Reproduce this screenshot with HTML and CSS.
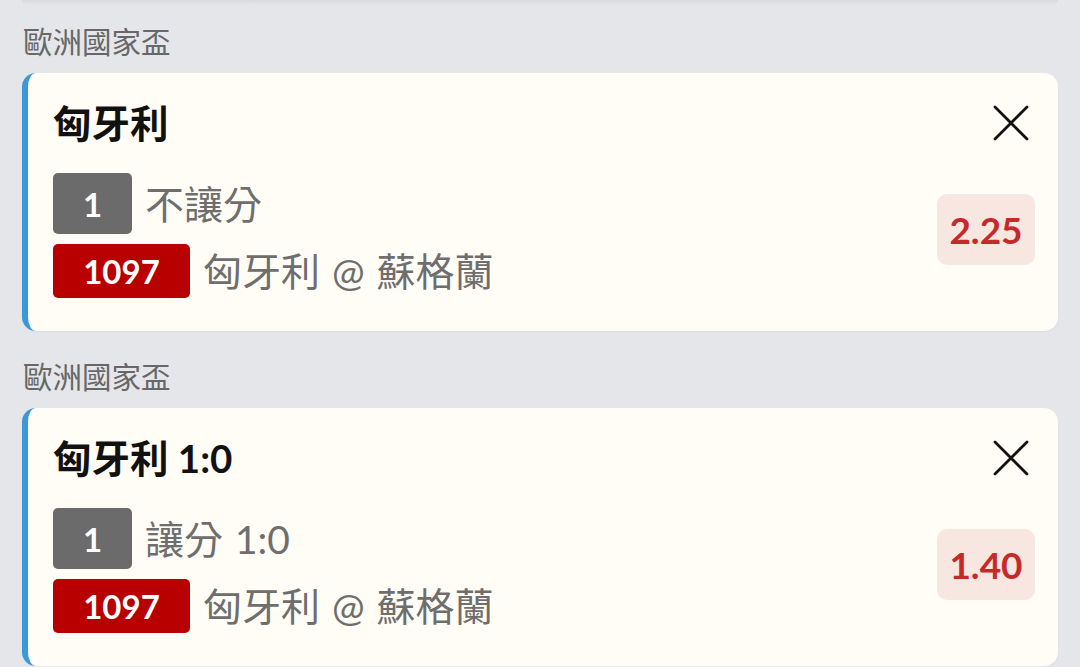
FILE: index.html
```html
<!DOCTYPE html>
<html lang="zh-Hant">
<head>
    <meta charset="UTF-8">
    <meta name="viewport" content="width=device-width, initial-scale=1.0">
    <title>投注單</title>
    <link rel="stylesheet" href="styles.css">
</head>
<body>
    <div class="slip">
        <div class="prev-edge"></div>

        <div class="group">
            <div class="league">歐洲國家盃</div>
            <div class="bet-card">
                <div class="bet-head">
                    <div class="bet-title">匈牙利</div>
                    <button class="close-btn" aria-label="移除">
                        <svg width="48" height="48" viewBox="0 0 48 48"><path d="M8 8 L40 40 M40 8 L8 40" stroke="#111" stroke-width="2.8" stroke-linecap="round" fill="none"/></svg>
                    </button>
                </div>
                <div class="bet-body">
                    <div class="bet-lines">
                        <div class="bet-line">
                            <span class="tag tag-gray">1</span>
                            <span class="line-text">不讓分</span>
                        </div>
                        <div class="bet-line">
                            <span class="tag tag-red">1097</span>
                            <span class="line-text">匈牙利 @ 蘇格蘭</span>
                        </div>
                    </div>
                    <div class="odds">2.25</div>
                </div>
            </div>
        </div>

        <div class="group">
            <div class="league">歐洲國家盃</div>
            <div class="bet-card">
                <div class="bet-head">
                    <div class="bet-title">匈牙利 1:0</div>
                    <button class="close-btn" aria-label="移除">
                        <svg width="48" height="48" viewBox="0 0 48 48"><path d="M8 8 L40 40 M40 8 L8 40" stroke="#111" stroke-width="2.8" stroke-linecap="round" fill="none"/></svg>
                    </button>
                </div>
                <div class="bet-body">
                    <div class="bet-lines">
                        <div class="bet-line">
                            <span class="tag tag-gray">1</span>
                            <span class="line-text">讓分 1:0</span>
                        </div>
                        <div class="bet-line">
                            <span class="tag tag-red">1097</span>
                            <span class="line-text">匈牙利 @ 蘇格蘭</span>
                        </div>
                    </div>
                    <div class="odds">1.40</div>
                </div>
            </div>
        </div>
    </div>
</body>
</html>
```

FILE: styles.css
```css
body {
    margin: 0;
    background-color: #e4e6e9;
    font-family: Lato, "Noto Sans CJK TC", sans-serif;
    overflow: hidden;
}
.slip {
    padding: 0 22px;
}
.prev-edge {
    height: 5px;
    background: linear-gradient(#d8dade, #e4e6e9);
    border-radius: 0 0 14px 14px;
}
.group + .group {
    margin-top: 9px;
}
.league {
    padding: 16px 0 10px 1px;
    font-size: 29.5px;
    line-height: 42px;
    color: #676767;
}
.bet-card {
    background-color: #fffdf5;
    border-left: 6px solid #3b98da;
    border-radius: 14px;
    padding: 28px 23px 33px 25px;
    box-shadow: 0 1px 2px rgba(0, 0, 0, 0.04);
}
.bet-head {
    display: flex;
    align-items: center;
    justify-content: space-between;
    height: 44px;
    margin-bottom: 28px;
}
.bet-title {
    font-size: 38.5px;
    line-height: 44px;
    font-weight: 700;
    color: #111;
}
.close-btn {
    width: 48px;
    height: 48px;
    padding: 0;
    border: none;
    background: none;
    cursor: pointer;
}
.close-btn svg {
    display: block;
}
.bet-body {
    display: flex;
    align-items: center;
    justify-content: space-between;
}
.bet-lines {
    display: flex;
    flex-direction: column;
    gap: 10px;
}
.bet-line {
    display: flex;
    align-items: center;
    gap: 13px;
}
.tag {
    display: flex;
    align-items: center;
    justify-content: center;
    color: #fff;
    font-weight: 700;
    font-size: 33px;
    border-radius: 5px;
}
.tag-gray {
    width: 79px;
    height: 61px;
    background-color: #6b6b6b;
}
.tag-red {
    width: 137px;
    height: 54px;
    background-color: #b80000;
}
.line-text {
    font-size: 39px;
    line-height: 48px;
    color: #6e6e6e;
    word-spacing: 2px;
}
.odds {
    width: 98px;
    height: 71px;
    margin-bottom: 12px;
    display: flex;
    align-items: center;
    justify-content: center;
    background-color: #f8e6e0;
    border-radius: 10px;
    color: #c42a2a;
    font-size: 37px;
    font-weight: 700;
}
```
